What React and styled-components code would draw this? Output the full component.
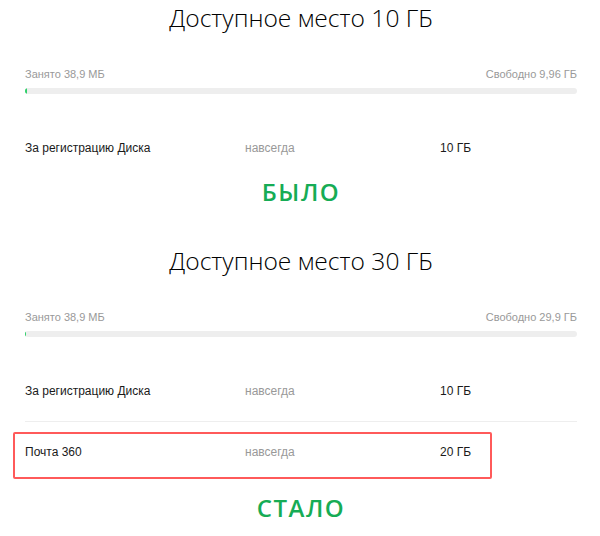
import React from "react";
import styled, { createGlobalStyle } from "styled-components";

const Global = createGlobalStyle`
  html, body { margin: 0; padding: 0; background: #fff; }
  body { font-family: "Liberation Sans", Arial, sans-serif; }
`;

const Page = styled.div`
  width: 600px;
  padding: 0 23px 0 25px;
  box-sizing: border-box;
  display: flex;
  flex-direction: column;
`;

const Section = styled.section`
  display: flex;
  flex-direction: column;
  margin-top: ${(p) => p.$top || 0}px;
`;

const Title = styled.h2`
  margin: 0;
  font-family: "Open Sans", sans-serif;
  font-weight: 300;
  font-size: 24.6px;
  line-height: 36px;
  color: #000;
  text-align: center;
`;

const Labels = styled.div`
  margin-top: 30px;
  display: flex;
  justify-content: space-between;
  font-size: 11px;
  line-height: 16px;
  color: #999;
`;

const Bar = styled.div`
  margin-top: 6px;
  height: 6px;
  border-radius: 3px;
  background: #eeeeee;
  overflow: hidden;
`;

const Fill = styled.div`
  height: 100%;
  background: #2fd06a;
  border-radius: 3px;
`;

const Rows = styled.div`
  margin-top: 24px;
  display: flex;
  flex-direction: column;
`;

const Row = styled.div`
  position: relative;
  display: grid;
  grid-template-columns: 220px 195px 1fr;
  align-items: center;
  height: 60px;
  font-size: 12px;
  color: #1a1a1a;
  & + & {
    border-top: 1px solid #eeeeee;
  }
`;

const Term = styled.span`
  color: #999;
`;

const Highlight = styled.div`
  position: absolute;
  left: -12px;
  top: 10px;
  width: 479px;
  height: 47px;
  box-sizing: border-box;
  border: 2px solid #ff5a5a;
  border-radius: 2px;
  pointer-events: none;
`;

const Stamp = styled.div`
  margin-top: ${(p) => p.$top}px;
  text-align: center;
  font-family: "Open Sans", sans-serif;
  font-weight: 600;
  font-size: 24px;
  letter-spacing: 1.5px;
  line-height: 28px;
  color: #16ac55;
`;

const sections = [
  {
    total: "10 ГБ",
    free: "9,96 ГБ",
    fill: 2,
    rows: [{ name: "За регистрацию Диска", term: "навсегда", size: "10 ГБ" }],
    stamp: "БЫЛО",
    top: 0,
    stampTop: 0,
  },
  {
    total: "30 ГБ",
    free: "29,9 ГБ",
    fill: 1,
    rows: [
      { name: "За регистрацию Диска", term: "навсегда", size: "10 ГБ" },
      { name: "Почта 360", term: "навсегда", size: "20 ГБ", mark: true },
    ],
    stamp: "СТАЛО",
    top: 37,
    stampTop: 12,
  },
];

export default function App() {
  return (
    <>
      <Global />
      <Page>
        {sections.map((s, i) => (
          <Section key={i} $top={s.top}>
            <Title>Доступное место {s.total}</Title>
            <Labels>
              <span>Занято 38,9 МБ</span>
              <span>Свободно {s.free}</span>
            </Labels>
            <Bar>
              <Fill style={{ width: s.fill + "px" }} />
            </Bar>
            <Rows>
              {s.rows.map((r, j) => (
                <Row key={j}>
                  <span>{r.name}</span>
                  <Term>{r.term}</Term>
                  <span>{r.size}</span>
                  {r.mark && <Highlight />}
                </Row>
              ))}
            </Rows>
            <Stamp $top={s.stampTop}>{s.stamp}</Stamp>
          </Section>
        ))}
      </Page>
    </>
  );
}
